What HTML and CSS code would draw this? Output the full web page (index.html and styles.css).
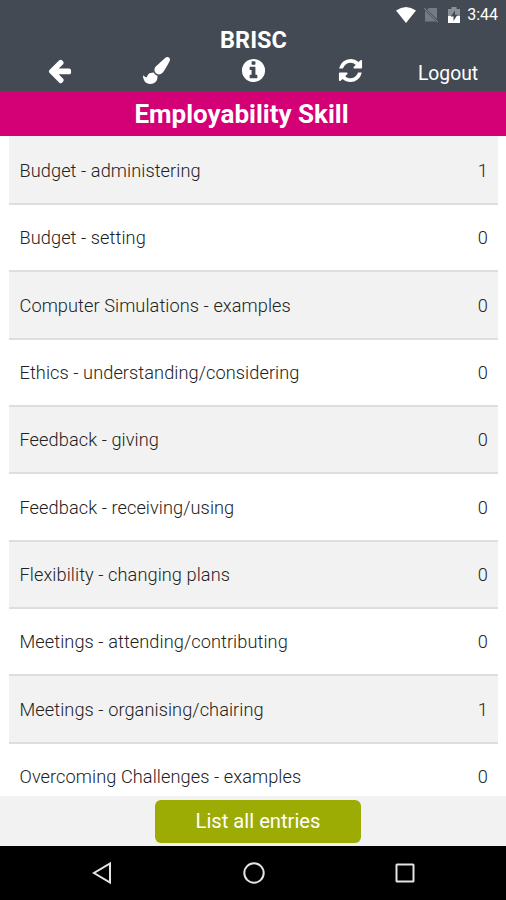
FILE: index.html
```html
<!DOCTYPE html>
<html lang="en">
<head>
  <meta charset="UTF-8" />
  <meta name="viewport" content="width=device-width, initial-scale=1.0"/>
  <title>BRISC</title>
  <link rel="stylesheet" href="styles.css">
</head>
<body>
  <header class="header">
    <div class="status-bar">
      <svg class="wifi" viewBox="0 0 20 16"><path d="M0 3.6Q10-3.6 20 3.6L10 16z"/></svg>
      <svg class="no-sim" viewBox="0 0 14 16"><path d="M5 1h8v11L3 2.500zM1 3.500L12 14.500H1z"/><path class="slash" d="M0 1l14 14"/></svg>
      <svg class="battery" viewBox="0 0 12 16"><path class="dim" d="M0 2h3.500V0h5v2H12v7H0z"/><path d="M0 9h12v7H0z"/><path class="bolt" d="M7 3.500L2.800 9.500H5.500V14L9.500 7.800H7z"/></svg>
      <span class="time">3:44</span>
    </div>
    <h1>BRISC</h1>
    <nav class="toolbar">
      <a><svg viewBox="0 0 1792 1792"><path d="M1664 896v128q0 53-32.500 90.500t-84.500 37.500h-704l293 294q38 36 38 90t-38 90l-75 76q-37 37-90 37-52 0-91-37l-651-652q-37-37-37-90 0-52 37-91l651-650q38-38 91-38 52 0 90 38l75 74q38 38 38 91t-38 91l-293 293h704q52 0 84.500 37.500t32.500 90.500z"/></svg></a>
      <a><svg viewBox="0 0 1792 1792"><path d="M1615 0q70 0 122.500 46.500t52.500 116.500q0 63-45 151-332 629-465 752-97 91-218 91-126 0-216.500-92.500t-90.500-219.500q0-128 92-212l638-579q59-54 130-54zm-909 1034q39 76 106.500 130t150.500 76l1 71q4 213-129.500 347t-348.500 134q-123 0-218-46.500t-152.500-127.500-86.500-183-29-220q7 5 41 30t62 44.500 59 36.500 46 17q41 0 55-37 25-66 57.500-112.500t69.500-76 88-47.500 103-25.500 125-10.500z"/></svg></a>
      <a><svg viewBox="0 0 1792 1792"><path d="M1152 1376v-160q0-14-9-23t-23-9h-96v-512q0-14-9-23t-23-9h-320q-14 0-23 9t-9 23v160q0 14 9 23t23 9h96v320h-96q-14 0-23 9t-9 23v160q0 14 9 23t23 9h448q14 0 23-9t9-23zm-128-896v-160q0-14-9-23t-23-9h-192q-14 0-23 9t-9 23v160q0 14 9 23t23 9h192q14 0 23-9t9-23zm640 416q0 209-103 385.500t-279.500 279.500-385.500 103-385.500-103-279.500-279.500-103-385.500 103-385.500 279.500-279.500 385.500-103 385.500 103 279.500 279.500 103 385.500z"/></svg></a>
      <a><svg viewBox="0 0 1792 1792"><path d="M1639 1056q0 5-1 7-64 268-268 434.500t-478 166.500q-146 0-282.500-55t-243.500-157l-129 129q-19 19-45 19t-45-19-19-45v-448q0-26 19-45t45-19h448q26 0 45 19t19 45-19 45l-137 137q71 66 161 102t187 36q134 0 250-65t186-179q11-17 53-117 8-23 30-23h192q13 0 22.500 9.500t9.500 22.500zm25-800v448q0 26-19 45t-45 19h-448q-26 0-45-19t-19-45 19-45l138-138q-148-137-349-137-134 0-250 65t-186 179q-11 17-53 117-8 23-30 23h-199q-13 0-22.500-9.500t-9.500-22.500v-7q65-268 270-434.500t480-166.500q146 0 284 55.500t245 156.500l130-129q19-19 45-19t45 19 19 45z"/></svg></a>
      <a class="logout">Logout</a>
    </nav>
  </header>

  <h2>Employability Skill</h2>

  <ul class="skills">
    <li><span>Budget - administering</span><span>1</span></li>
    <li><span>Budget - setting</span><span>0</span></li>
    <li><span>Computer Simulations - examples</span><span>0</span></li>
    <li><span>Ethics - understanding/considering</span><span>0</span></li>
    <li><span>Feedback - giving</span><span>0</span></li>
    <li><span>Feedback - receiving/using</span><span>0</span></li>
    <li><span>Flexibility - changing plans</span><span>0</span></li>
    <li><span>Meetings - attending/contributing</span><span>0</span></li>
    <li><span>Meetings - organising/chairing</span><span>1</span></li>
    <li><span>Overcoming Challenges - examples</span><span>0</span></li>
  </ul>

  <footer class="footer">
    <button class="list-btn">List all entries</button>
  </footer>

  <div class="nav-bar">
    <svg viewBox="0 0 24 24"><path d="M19 2.500v19L3 12z"/></svg>
    <svg viewBox="0 0 24 24"><circle cx="12" cy="12" r="9.700"/></svg>
    <svg viewBox="0 0 24 24"><rect x="3.500" y="3.500" width="17" height="17" rx=".5"/></svg>
  </div>
</body>
</html>
```
FILE: styles.css
```css
* { box-sizing: border-box; }
body {
  display: flex;
  flex-direction: column;
  height: 900px;
  margin: 0;
  overflow: hidden;
  background: #fff;
  color: #222;
  font-family: Roboto, "Liberation Sans", sans-serif;
}
.header {
  flex: none;
  height: 91px;
  background: #434a54;
  color: #fff;
}
.status-bar {
  display: flex;
  align-items: center;
  justify-content: flex-end;
  height: 29px;
  padding-right: 8px;
}
.status-bar svg { height: 16px; fill: #fff; }
.wifi { width: 20px; margin-right: 8px; }
.status-bar .no-sim { width: 14px; margin-right: 10px; fill: #777b81; }
.slash { stroke: #777b81; stroke-width: 1.2; }
.battery { width: 12px; margin-right: 7px; }
.dim { fill: #8b9096; }
.bolt { fill: #434a54; }
.time { font-size: 16px; }
h1 {
  margin: 0;
  padding-left: 1px;
  font-size: 23.5px;
  line-height: 22px;
  font-weight: 700;
  text-align: center;
}
.toolbar {
  display: grid;
  grid-template-columns: repeat(5, 97px);
  justify-content: center;
  align-items: center;
  height: 39px;
  padding-left: 1px;
}
.toolbar a { display: flex; justify-content: center; }
.toolbar svg { width: 27px; height: 27px; fill: #fff; }
.toolbar .logout { padding: 5px 0 0 1px; font-size: 19.3px; }
h2 {
  flex: none;
  height: 45px;
  margin: 0;
  padding-right: 23px;
  background: #d40075;
  color: #fff;
  font-size: 26px;
  line-height: 46px;
  font-weight: 700;
  text-align: center;
}
.skills {
  flex: 1;
  min-height: 0;
  margin: 0;
  padding: 0 8px 0 9px;
  overflow: hidden;
  list-style: none;
}
.skills li {
  display: flex;
  align-items: center;
  justify-content: space-between;
  height: 67.35px;
  padding: 0 10px 0 10.5px;
  border-bottom: 2px solid #dedede;
  font-size: 18.2px;
  font-weight: 300;
  letter-spacing: .07px;
}
.skills li:first-child { height: 69px; padding-top: 1px; }
.skills li:nth-child(odd) { background: #f2f2f2; }
.footer {
  display: flex;
  flex: none;
  justify-content: center;
  height: 50px;
  padding: 4px 0 0 10px;
  background: #f2f2f2;
}
.list-btn {
  width: 206px;
  height: 43px;
  padding: 0 0 2px;
  border: none;
  border-radius: 6px;
  background: #9dab05;
  color: #fff;
  font: 400 20.2px Roboto, sans-serif;
}
.nav-bar {
  display: flex;
  flex: none;
  justify-content: space-around;
  align-items: center;
  height: 54px;
  padding: 0 25px 0 27px;
  background: #000;
}
.nav-bar svg { width: 24px; height: 24px; fill: none; stroke: #e4e4e4; stroke-width: 2; }
```
